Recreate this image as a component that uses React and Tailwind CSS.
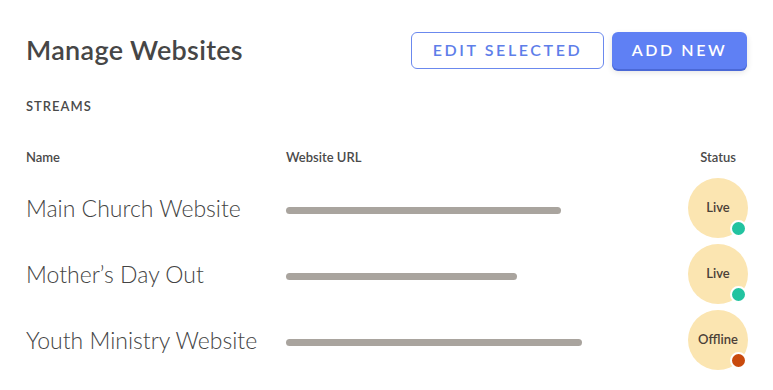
import React from 'react';

const sites = [
  { name: 'Main Church Website', bar: 275, status: 'Live', live: true },
  { name: 'Mother\u2019s Day Out', bar: 231, status: 'Live', live: true },
  { name: 'Youth Ministry Website', bar: 296, status: 'Offline', live: false },
];

function StatusBadge({ label, live }) {
  return (
    <div className="relative w-[60px] h-[60px] rounded-full bg-[#fbe5b1] flex items-center justify-center">
      <span className="text-[13px] font-semibold text-[#4a4038]">{label}</span>
      {/* status dot */}
      <span
        className={
          live
            ? 'absolute right-[1px] bottom-[1px] w-[17px] h-[17px] rounded-full border-2 border-white bg-[#22c3a0]'
            : 'absolute right-[1px] bottom-[1px] w-[17px] h-[17px] rounded-full border-2 border-white bg-[#c94a0d]'
        }
      />
    </div>
  );
}

export default function App() {
  return (
    <div className="w-[773px] h-[390px] bg-white overflow-hidden text-[#4a4a4a] font-['Lato',sans-serif]">
      {/* header */}
      <div className="flex items-center justify-between pl-[26px] pr-[26px] pt-[30px]">
        <h1 className="text-[27px] font-semibold tracking-[0.3px] text-[#464646]">Manage Websites</h1>
        <div className="flex gap-[8px]">
          <button className="w-[193px] h-[37px] rounded-[6px] border-[1.5px] border-[#6b89ee] text-[#5e7ee9] text-[16px] font-semibold tracking-[2.6px] bg-white">
            EDIT SELECTED
          </button>
          <button className="w-[135px] h-[37px] rounded-[6px] bg-[#5f80f4] text-white text-[16px] font-semibold tracking-[2.6px] shadow-[0_2px_0_#4a68d6,0_3px_6px_rgba(0,0,0,0.12)]">
            ADD NEW
          </button>
        </div>
      </div>

      <div className="pl-[26px] pt-[26px] text-[13px] font-semibold tracking-[1px] text-[#4a4a4a]">STREAMS</div>

      {/* table */}
      <div className="pl-[26px] pr-[25px] pt-[32px]">
        <div className="grid grid-cols-[260px_1fr_60px] items-center text-[13px] font-semibold text-[#4a4a4a]">
          <span>Name</span>
          <span>Website URL</span>
          <span className="text-center">Status</span>
        </div>
        <div className="flex flex-col gap-[6px] pt-[10px]">
          {sites.map((s) => (
            <div key={s.name} className="grid grid-cols-[260px_1fr_60px] items-center h-[60px]">
              <span className="text-[23px] font-light text-[#444] pt-[2px] whitespace-nowrap">{s.name}</span>
              <div className="h-[7px] rounded-full bg-[#a9a49e] mt-[5px]" style={{ width: s.bar }} />
              <StatusBadge label={s.status} live={s.live} />
            </div>
          ))}
        </div>
      </div>
    </div>
  );
}
